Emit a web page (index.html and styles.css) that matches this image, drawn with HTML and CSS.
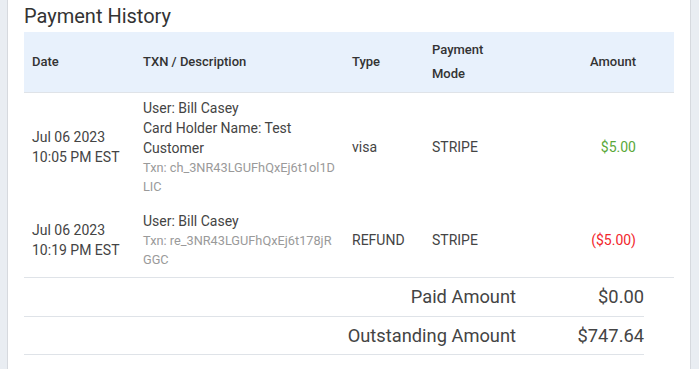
FILE: index.html
```html
<!DOCTYPE html>
<html>
<head>
<meta charset="utf-8">
<link rel="stylesheet" href="styles.css">
</head>
<body>
<div class="panel">
  <h2 class="title">Payment History</h2>
  <table class="history">
    <thead>
      <tr>
        <th class="c-date">Date</th>
        <th class="c-txn">TXN / Description</th>
        <th class="c-type">Type</th>
        <th class="c-mode">Payment<br>Mode</th>
        <th class="c-amt">Amount</th>
        <th class="c-pad"></th>
      </tr>
    </thead>
    <tbody>
      <tr class="row-a">
        <td>Jul 06 2023<br>10:05 PM EST</td>
        <td>User: Bill Casey<br>Card Holder Name: Test Customer<div class="txn">Txn: ch_3NR43LGUFhQxEj6t1ol1DLIC</div></td>
        <td>visa</td>
        <td>STRIPE</td>
        <td class="c-amt pos">$5.00</td>
        <td></td>
      </tr>
      <tr class="row-b">
        <td>Jul 06 2023<br>10:19 PM EST</td>
        <td>User: Bill Casey<div class="txn">Txn: re_3NR43LGUFhQxEj6t178jRGGC</div></td>
        <td>REFUND</td>
        <td>STRIPE</td>
        <td class="c-amt neg">($5.00)</td>
        <td></td>
      </tr>
    </tbody>
  </table>
  <div class="summary">
    <div class="s-row"><span class="s-label">Paid Amount</span><span class="s-val">$0.00</span></div>
    <div class="s-row"><span class="s-label">Outstanding Amount</span><span class="s-val">$747.64</span></div>
  </div>
</div>
</body>
</html>
```
FILE: styles.css
```css
html, body {
  margin: 0;
  padding: 0;
  background: #e9edf2;
  font-family: Roboto, "Liberation Sans", sans-serif;
  color: #333;
}
body {
  height: 369px;
  overflow: hidden;
}
.panel {
  margin-left: 7px;
  width: 684px;
  min-height: 369px;
  box-sizing: border-box;
  background: #fff;
  border-left: 1px solid #d6d9de;
  border-right: 1px solid #d6d9de;
  padding: 0 16px;
}
.title {
  margin: 0;
  padding-top: 4px;
  height: 32px;
  box-sizing: border-box;
  font-size: 20px;
  line-height: 24px;
  font-weight: 400;
  color: #333;
}
.history {
  width: 650px;
  border-collapse: collapse;
  table-layout: fixed;
}
.history th {
  background: #e8f1fc;
  text-align: left;
  font-size: 13px;
  font-weight: 500;
  line-height: 24px;
  padding: 6px 8px;
  color: #333;
  border-bottom: 1px solid #dfe3e8;
  vertical-align: middle;
}
.c-date { width: 95px; }
.c-txn { width: 193px; }
.c-type { width: 64px; }
.c-mode { width: 104px; }
.c-amt { width: 84px; text-align: right !important; }
.c-pad { width: 14px; }
.history td {
  font-size: 14px;
  line-height: 20px;
  padding: 4px 8px;
  vertical-align: middle;
  color: #444;
}
.row-a td { padding-top: 5px; padding-bottom: 3px; }
.txn {
  font-size: 12.75px;
  line-height: 19px;
  color: #9a9a9a;
  word-break: break-all;
}
.row-b { height: 78px; }
.row-b td { border-bottom: 1px solid #dfe3e8; padding-top: 6px; padding-bottom: 2px; }
.pos { color: #5aa83a !important; }
.neg { color: #f2262c !important; }
.summary {
  width: 620px;
}
.s-row {
  display: grid;
  grid-template-columns: 1fr 128px;
  height: 38px;
  align-items: center;
  border-bottom: 1px solid #dfe3e8;
  font-size: 18.3px;
  color: #444;
}
.s-row span { text-align: right; }
.s-row + .s-row { height: 37px; }
```
